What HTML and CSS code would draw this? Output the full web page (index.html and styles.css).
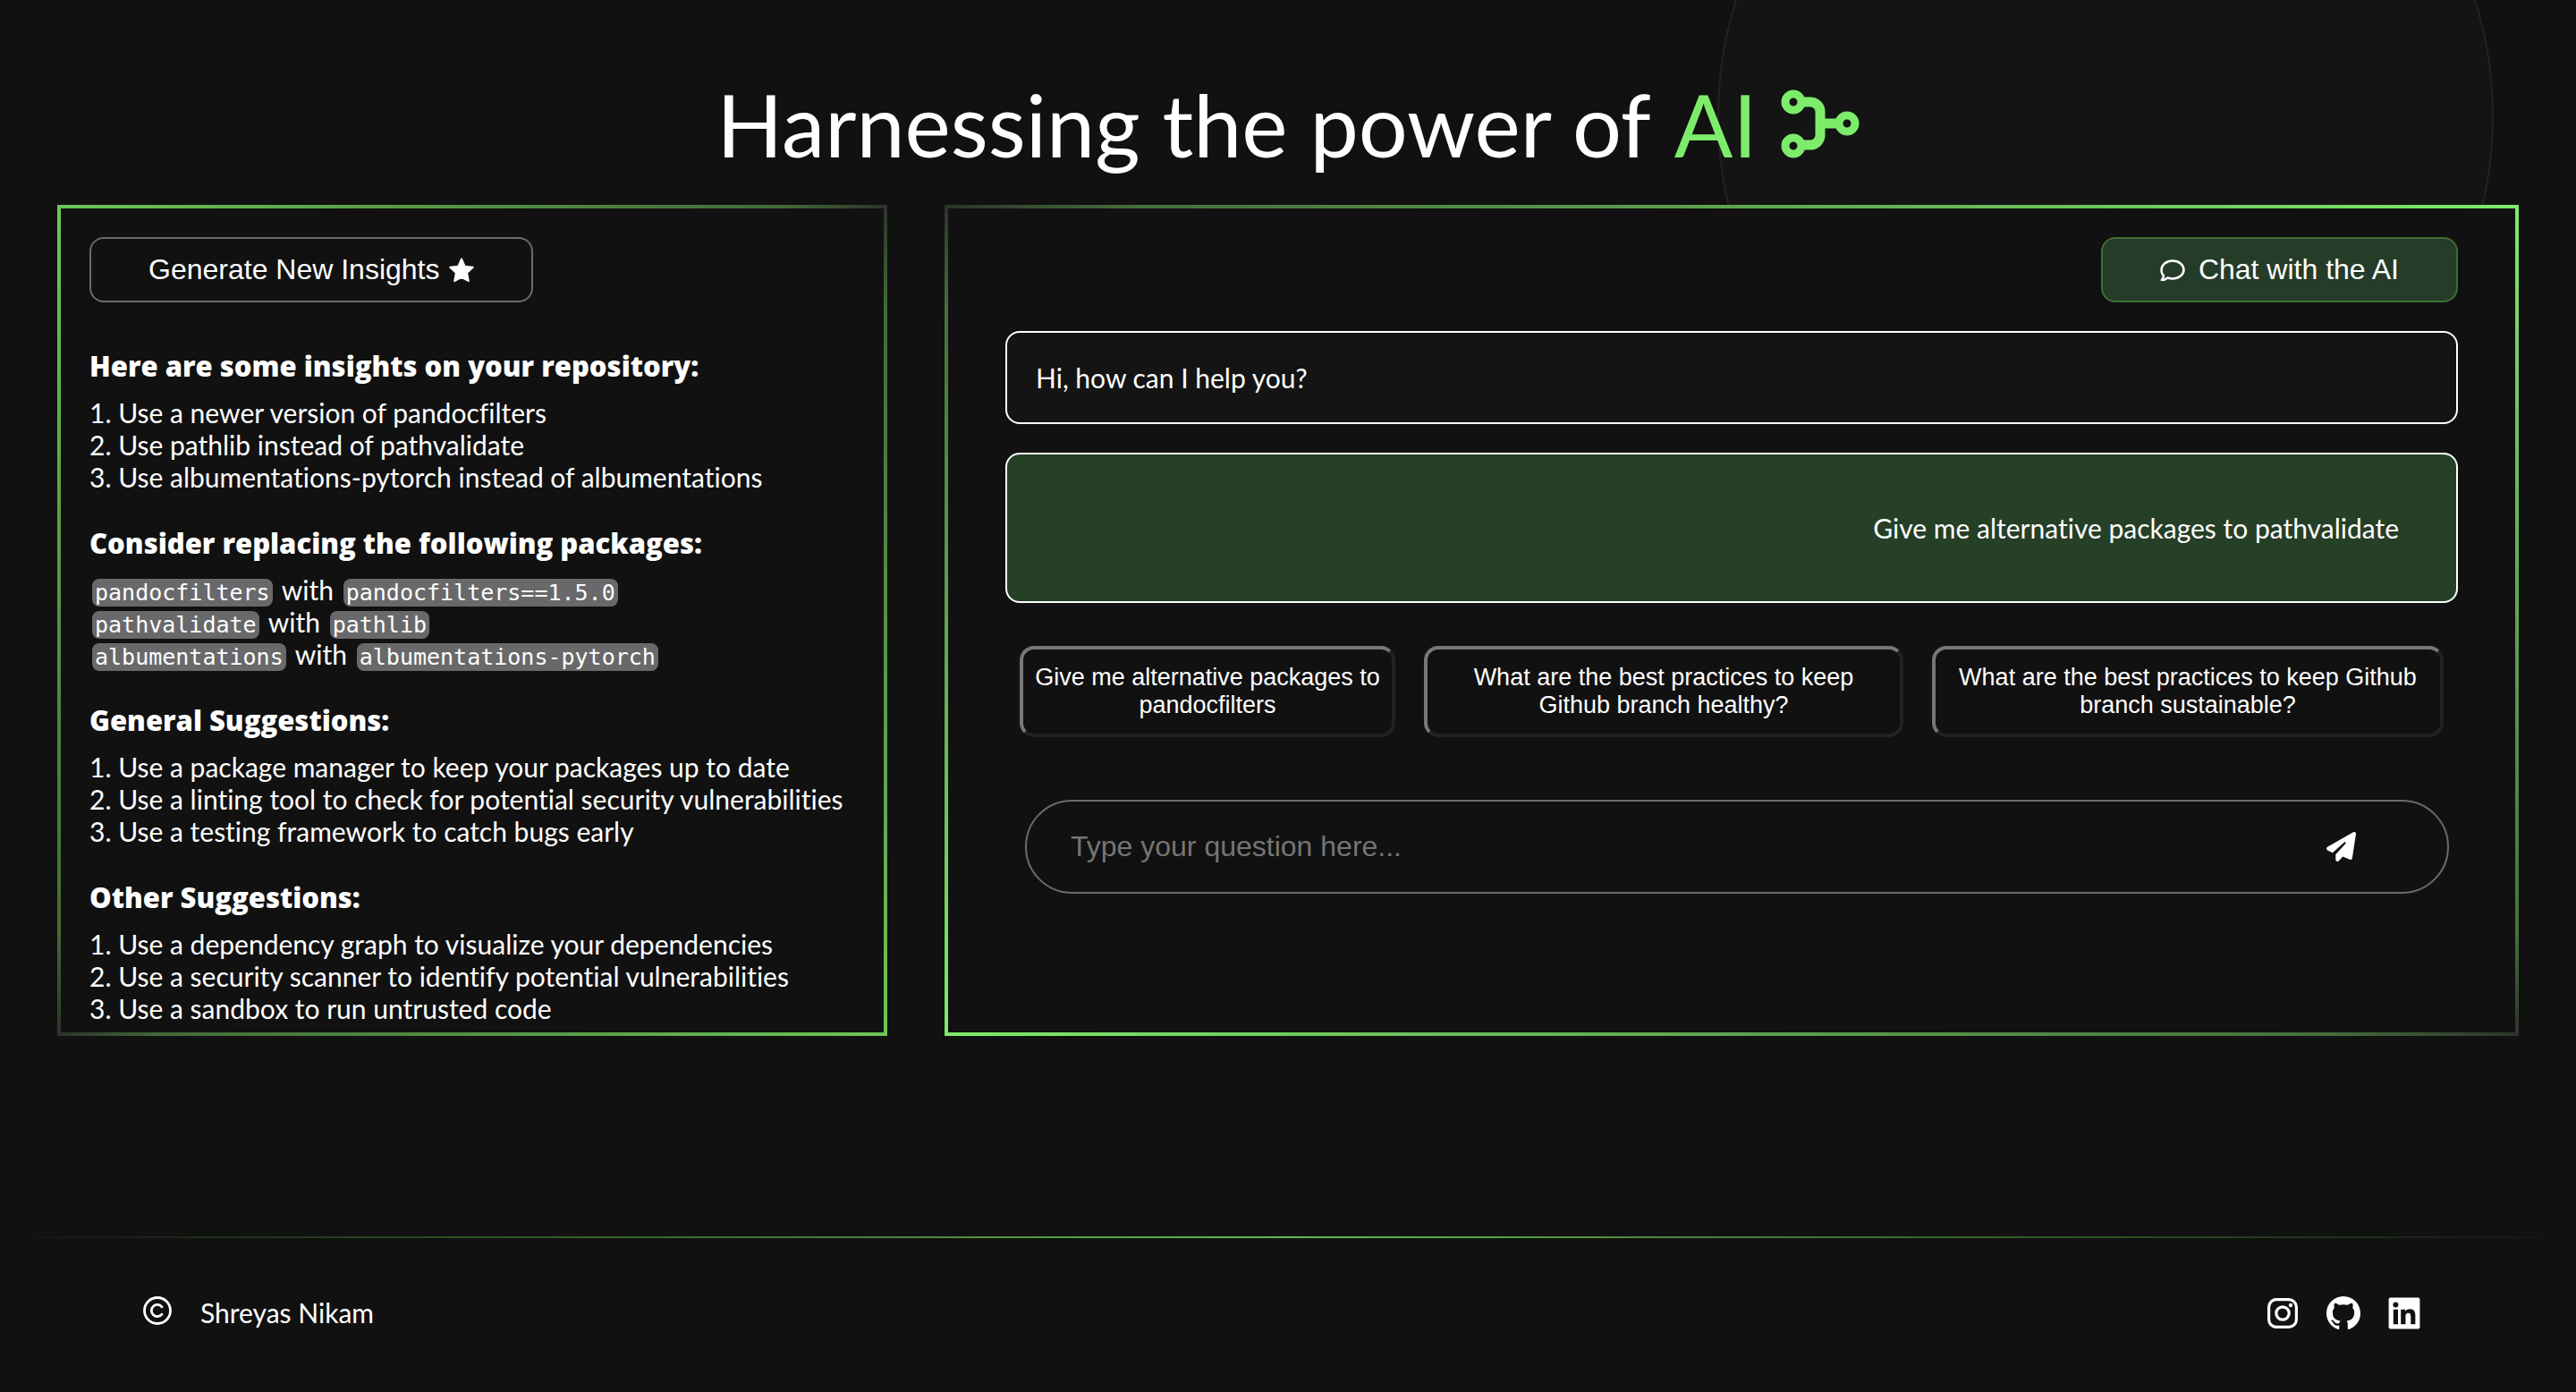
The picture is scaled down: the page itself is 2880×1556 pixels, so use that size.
FILE: index.html
```
<!DOCTYPE html>
<html lang="en">
<head>
<meta charset="utf-8">
<title>AI Insights</title>
<link rel="stylesheet" href="styles.css">
</head>
<body>
<div class="orb" aria-hidden="true"></div>
<main class="page">
  <h1 class="title">Harnessing the power of <span class="accent">AI</span>
    <svg class="title-icon" viewBox="0 0 88 78" aria-hidden="true"><g fill="none" stroke="currentColor"><g stroke-width="9"><circle cx="14" cy="14" r="9"/><circle cx="14" cy="63" r="9"/><circle cx="74" cy="38" r="9"/></g><path stroke-width="11" d="M25 14h8a11 11 0 0 1 11 11v26a11 11 0 0 1-11 11h-8M44 38h18"/></g></svg>
  </h1>
  <div class="panels">
    <section class="panel insights">
      <button class="btn" type="button">Generate New Insights
        <svg class="star" viewBox="0 0 28 28" aria-hidden="true"><path fill="currentColor" stroke="currentColor" stroke-width="2" stroke-linejoin="round" d="M14 1.500l3.700 8.300 9 1-6.600 6.200 1.700 9.200L14 21.800l-7.800 4.400 1.700-9.200L1.300 10.800l9-1z"/></svg>
      </button>
      <div class="report">
        <section>
          <h2>Here are some insights on your repository:</h2>
          <ul>
            <li>1. Use a newer version of pandocfilters</li>
            <li>2. Use pathlib instead of pathvalidate</li>
            <li>3. Use albumentations-pytorch instead of albumentations</li>
          </ul>
        </section>
        <section>
          <h2>Consider replacing the following packages:</h2>
          <ul>
            <li><code>pandocfilters</code> with <code>pandocfilters==1.5.0</code></li>
            <li><code>pathvalidate</code> with <code>pathlib</code></li>
            <li><code>albumentations</code> with <code>albumentations-pytorch</code></li>
          </ul>
        </section>
        <section>
          <h2>General Suggestions:</h2>
          <ul>
            <li>1. Use a package manager to keep your packages up to date</li>
            <li>2. Use a linting tool to check for potential security vulnerabilities</li>
            <li>3. Use a testing framework to catch bugs early</li>
          </ul>
        </section>
        <section>
          <h2>Other Suggestions:</h2>
          <ul>
            <li>1. Use a dependency graph to visualize your dependencies</li>
            <li>2. Use a security scanner to identify potential vulnerabilities</li>
            <li>3. Use a sandbox to run untrusted code</li>
          </ul>
        </section>
      </div>
    </section>
    <section class="panel chat">
      <button class="btn btn-chat" type="button">
        <svg class="bubble" viewBox="0 0 28 28" aria-hidden="true"><path fill="none" stroke="currentColor" stroke-width="2.500" stroke-linejoin="round" d="M14 3.500c7 0 12.500 4.500 12.500 10S21 23.500 14 23.500c-2 0-3.800-.3-5.400-1C6.800 24 4.500 25 1.800 25c1.200-1.400 2-3 2.200-4.800A9.300 9.300 0 0 1 1.500 13.500C1.500 8 7 3.500 14 3.500z"/></svg>
        Chat with the AI
      </button>
      <p class="msg">Hi, how can I help you?</p>
      <p class="msg msg-user">Give me alternative packages to pathvalidate</p>
      <div class="prompts">
        <button class="prompt" type="button">Give me alternative packages to pandocfilters</button>
        <button class="prompt prompt-mid" type="button">What are the best practices to keep Github branch healthy?</button>
        <button class="prompt" type="button">What are the best practices to keep Github branch sustainable?</button>
      </div>
      <form class="ask">
        <input type="text" aria-label="Your question" placeholder="Type your question here...">
        <button class="send" type="button" aria-label="Send">
          <svg viewBox="0 0 512 512" aria-hidden="true"><path fill="currentColor" d="M498.100 5.600c10.100 7 15.400 19.100 13.500 31.200l-64 416c-1.500 9.700-7.400 18.200-16 23s-18.900 5.400-28 1.600L284 427.700l-68.500 74.100c-8.900 9.700-22.900 12.900-35.200 8.100S160 493.200 160 480V396.400c0-4 1.500-7.800 4.200-10.700L331.800 202.800c5.800-6.300 5.600-16-.4-22s-15.700-6.400-22-.7L106 360.800 17.700 316.600C7.100 311.300 .3 300.700 0 288.900s5.900-22.800 16.100-28.700l448-256c10.700-6.100 23.900-5.500 34 1.400z"/></svg>
        </button>
      </form>
    </section>
  </div>
</main>
<footer class="footer">
  <div class="owner">
    <svg class="copy" viewBox="0 0 32 32" aria-hidden="true"><g fill="none" stroke="currentColor" stroke-width="2.800"><circle cx="16" cy="16" r="14.500"/><path stroke-linecap="round" d="M21 11.800a6.600 6.600 0 1 0 0 8.400"/></g></svg>
    <span>Shreyas Nikam</span>
  </div>
  <nav class="social" aria-label="Social links">
    <a href="#instagram" aria-label="Instagram"><svg viewBox="-1 -1 38 38" aria-hidden="true"><g fill="none" stroke="currentColor" stroke-width="3.200"><rect x="2.600" y="2.600" width="30.800" height="30.800" rx="8.500"/><circle cx="18" cy="18" r="7.200"/></g><circle cx="27" cy="9" r="2.200" fill="currentColor"/></svg></a>
    <a href="#github" aria-label="GitHub"><svg viewBox="0 0 16 16" aria-hidden="true"><path fill="currentColor" d="M8 0C3.580 0 0 3.580 0 8c0 3.540 2.290 6.530 5.470 7.590.4.070.55-.17.550-.38 0-.19-.01-.82-.01-1.490-2.010.37-2.530-.49-2.690-.94-.09-.23-.48-.94-.82-1.130-.28-.15-.68-.52-.01-.53.630-.01 1.080.58 1.230.82.720 1.210 1.870.87 2.330.66.070-.52.280-.87.510-1.070-1.780-.2-3.640-.89-3.640-3.950 0-.87.310-1.590.82-2.150-.08-.2-.36-1.020.08-2.120 0 0 .67-.21 2.200.82.640-.18 1.320-.27 2-.27s1.360.09 2 .27c1.530-1.040 2.200-.82 2.200-.82.440 1.100.16 1.920.08 2.120.51.560.82 1.270.82 2.150 0 3.070-1.870 3.750-3.650 3.950.29.250.54.730.54 1.480 0 1.070-.01 1.930-.01 2.200 0 .21.150.46.550.38A8.010 8.010 0 0 0 16 8c0-4.420-3.580-8-8-8z"/></svg></a>
    <a href="#linkedin" aria-label="LinkedIn"><svg viewBox="0 0 24 24" aria-hidden="true"><path fill="currentColor" fill-rule="evenodd" d="M2.200 1h19.600c.7 0 1.200.5 1.200 1.200v19.600c0 .7-.5 1.200-1.200 1.200H2.200C1.500 23 1 22.500 1 21.800V2.200C1 1.500 1.500 1 2.200 1zM4.300 9.300v10.400h3.300V9.300zM5.950 4.100a1.900 1.900 0 1 0 0 3.800 1.900 1.900 0 0 0 0-3.800zM9.600 9.300v10.400h3.300v-5.200c0-1.400.3-2.700 2-2.700s1.700 1.600 1.700 2.800v5.100h3.200V14c0-2.800-.6-5-3.900-5-1.600 0-2.600.9-3.100 1.700V9.300z"/></svg></a>
  </nav>
</footer>
</body>
</html>
```
FILE: styles.css
```
* { box-sizing: border-box; }
body {
  margin: 0;
  min-height: 100vh;
  display: flex;
  flex-direction: column;
  position: relative;
  overflow-x: hidden;
  background: #111;
  color: #fff;
  font: 30px/36px "Gill Sans", Lato, sans-serif;
  font-variant-ligatures: none;
}
h1, h2, p, ul { margin: 0; padding: 0; font-weight: 400; }
ul { list-style: none; }
button, input { font-family: "Liberation Sans", Arial, sans-serif; color: inherit; }
svg { display: block; flex: none; }

.orb {
  position: absolute;
  z-index: -1;
  top: -304px;
  right: 92px;
  width: 868px;
  height: 868px;
  border: 2px solid #222;
  border-radius: 50%;
  background: #141414;
}
.page { padding: 79px 64px 0; }
.title {
  display: flex;
  justify-content: center;
  align-items: center;
  gap: 26px;
  margin-bottom: 30px;
  font-size: 97px;
  line-height: 120px;
}
.accent, .title-icon { color: #7dec6a; }
.title-icon { width: 88px; height: 78px; }

.panels { display: flex; gap: 64px; }
.panel { border: 4px solid; background: #111; padding: 32px; }
.insights {
  flex: 0 0 928px;
  padding-bottom: 8px;
  border-image: linear-gradient(to bottom right, #6bc756, #426a38 44%, #2c352a 50%, #426a38 56%, #6bc756) 1;
}
.chat {
  flex: 1;
  display: flex;
  flex-direction: column;
  padding: 32px 64px;
  border-image: linear-gradient(to top right, #7dec6a, #456f3c 44%, #2c352a 50%, #456f3c 56%, #7dec6a) 1;
}
.btn {
  display: inline-flex;
  align-items: center;
  gap: 10px;
  height: 73px;
  padding: 0 64px;
  border: 2px solid #6b6b6b;
  border-radius: 16px;
  background: transparent;
  font-size: 32px;
}
.star, .bubble { width: 28px; height: 28px; }
.btn-chat {
  align-self: flex-end;
  gap: 15px;
  border-color: #3f6f2f;
  background: #253c29;
}
.report { display: grid; gap: 38px; margin-top: 53px; }
h2 {
  margin-bottom: 16px;
  font: 800 31px/36px "Gill Sans", "Open Sans", sans-serif;
}
code {
  margin: 0 3px;
  padding: 1px 3px;
  border-radius: 8px;
  background: #69696b;
  font: 25px/25px "DejaVu Sans Mono", monospace;
}
.msg {
  margin-top: 32px;
  padding: 32px;
  border: 2px solid #fff;
  border-radius: 16px;
  background: #141414;
}
.msg-user { padding: 64px; background: #263f27; text-align: right; }
.prompts {
  display: grid;
  grid-template-columns: 420fr 536fr 572fr;
  gap: 32px;
  padding: 48px 16px 0;
}
.prompt {
  height: 102px;
  padding: 0 8px;
  border: 4px solid;
  border-color: #777 #222 #222 #777;
  border-radius: 16px;
  background: transparent;
  font-size: 27px;
  line-height: 31px;
}
.prompt-mid { padding: 0 48px; }
.ask {
  display: flex;
  align-items: center;
  height: 105px;
  margin: 70px 10px 123px 22px;
  padding: 0 102px 0 49px;
  border: 2px solid #6b6b6b;
  border-radius: 53px;
}
.ask input {
  flex: 1;
  padding: 0;
  border: 0;
  background: none;
  font-size: 32px;
}
.ask input::placeholder { color: #757575; }
.send { padding: 0; border: 0; background: none; }
.send svg { width: 33px; height: 33px; }

.footer {
  display: flex;
  justify-content: space-between;
  margin-top: 224px;
  padding: 65px 173px 64px 160px;
  border-top: 2px solid;
  border-image: linear-gradient(90deg, #111, #62bd4f 50%, #111) 1;
}
.owner { display: flex; align-items: flex-start; gap: 32px; }
.copy { width: 32px; height: 32px; }
.social { display: flex; gap: 30px; }
.social a { color: #fff; }
.social svg { width: 38px; height: 38px; }
```
